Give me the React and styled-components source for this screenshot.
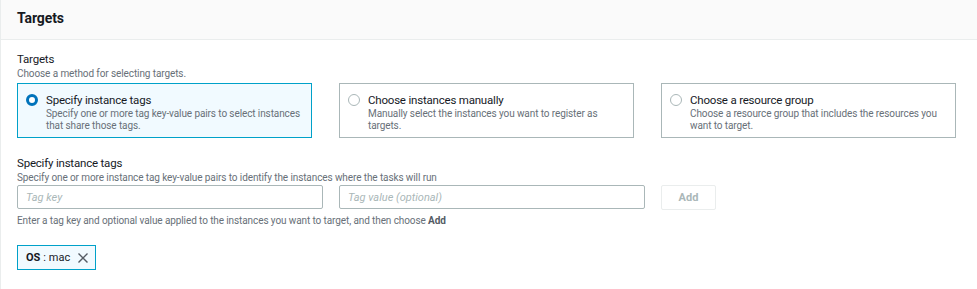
import React, { useState } from "react";
import styled, { createGlobalStyle } from "styled-components";

const Global = createGlobalStyle`
  html, body { margin: 0; padding: 0; background: #fff; }
  body { font-family: Roboto, "Liberation Sans", sans-serif; color: #16191f; }
  * { box-sizing: border-box; }
`;

const Panel = styled.section`
  width: 977px;
  height: 289px;
  border-left: 1px solid #eaeded;
  background: #fff;
`;

const Header = styled.header`
  height: 40px;
  background: #fafafa;
  border-bottom: 1px solid #eaeded;
  display: flex;
  align-items: center;
  padding: 0 16px 3px;
  h2 {
    margin: 0;
    font-size: 14px;
    letter-spacing: -0.1px;
    font-weight: 700;
    color: #16191f;
  }
`;

const Body = styled.div`
  padding: 11px 16px 0;
`;

const Label = styled.div`
  font-size: 11.5px;
  letter-spacing: -0.2px;
  line-height: 16px;
  color: #16191f;
`;

const Desc = styled.div`
  font-size: 10px;
  letter-spacing: -0.1px;
  line-height: 13px;
  color: #687078;
  b { color: #545b64; font-weight: 700; }
`;

const Tiles = styled.div`
  display: grid;
  grid-template-columns: repeat(3, 295px);
  column-gap: 27px;
  margin-top: 3px;
`;

const Tile = styled.label`
  height: 55px;
  border: 1px solid ${(p) => (p.$active ? "#00a1c9" : "#aab7b8")};
  background: ${(p) => (p.$active ? "#f1faff" : "#fff")};
  display: flex;
  padding: 9px 10px 0 8px;
  cursor: pointer;
`;

const Radio = styled.span`
  flex: none;
  width: 12px;
  height: 12px;
  margin-top: 1px;
  margin-right: 8px;
  border-radius: 50%;
  border: ${(p) => (p.$on ? "3px solid #0073bb" : "1px solid #aab7b8")};
  background: #fff;
`;

const TileTitle = styled.div`
  font-size: 11.5px;
  letter-spacing: -0.2px;
  line-height: 14px;
  color: #16191f;
`;

const TileDesc = styled.div`
  font-size: 10px;
  letter-spacing: -0.1px;
  line-height: 12px;
  color: #687078;
  margin-top: 1px;
`;

const Section = styled.div`
  margin-top: 17px;
`;

const InputRow = styled.div`
  display: flex;
  gap: 16px;
  margin-top: 1px;
  margin-bottom: 4px;
`;

const Input = styled.input`
  width: 306px;
  height: 24px;
  border: 1px solid #aab7b8;
  border-radius: 2px;
  padding: 0 8px;
  font-family: inherit;
  font-size: 11px;
  font-style: italic;
  color: #16191f;
  &::placeholder { color: #aab7b8; font-style: italic; }
  &:focus { outline: none; }
`;

const AddButton = styled.button`
  width: 55px;
  height: 25px;
  border: 1px solid #eaeded;
  background: #fff;
  color: #aab7b8;
  font-family: inherit;
  font-size: 11px;
  font-weight: 700;
  border-radius: 2px;
`;

const Tokens = styled.div`
  display: flex;
  margin-top: 18px;
`;

const Token = styled.div`
  display: flex;
  align-items: center;
  height: 25px;
  padding: 0 6px 0 8px;
  border: 1px solid #00a1c9;
  background: #f1faff;
  font-size: 11px;
  color: #16191f;
  b { font-weight: 700; margin-right: 3px; }
  svg { margin-left: 7px; }
`;

const options = [
  {
    id: "tags",
    title: "Specify instance tags",
    desc: "Specify one or more tag key-value pairs to select instances that share those tags.",
  },
  {
    id: "manual",
    title: "Choose instances manually",
    desc: "Manually select the instances you want to register as targets.",
  },
  {
    id: "group",
    title: "Choose a resource group",
    desc: "Choose a resource group that includes the resources you want to target.",
  },
];

const App = () => {
  const [selected, setSelected] = useState("tags");

  return (
    <Panel>
      <Global />
      <Header>
        <h2>Targets</h2>
      </Header>
      <Body>
        <Label>Targets</Label>
        <Desc>Choose a method for selecting targets.</Desc>
        <Tiles>
          {options.map((o) => (
            <Tile key={o.id} $active={selected === o.id} onClick={() => setSelected(o.id)}>
              <Radio $on={selected === o.id} />
              <div>
                <TileTitle>{o.title}</TileTitle>
                <TileDesc>{o.desc}</TileDesc>
              </div>
            </Tile>
          ))}
        </Tiles>
        <Section>
          <Label>Specify instance tags</Label>
          <Desc>Specify one or more instance tag key-value pairs to identify the instances where the tasks will run</Desc>
          <InputRow>
            <Input placeholder="Tag key" />
            <Input placeholder="Tag value (optional)" />
            <AddButton>Add</AddButton>
          </InputRow>
          <Desc>
            Enter a tag key and optional value applied to the instances you want to target, and then choose <b>Add</b>
          </Desc>
          <Tokens>
            <Token>
              <b>OS</b> : mac
              <svg width="12" height="12" viewBox="0 0 12 12">
                <path d="M1.5 1.5l9 9M10.5 1.5l-9 9" stroke="#545b64" strokeWidth="1.4" fill="none" />
              </svg>
            </Token>
          </Tokens>
        </Section>
      </Body>
    </Panel>
  );
};

export default App;
